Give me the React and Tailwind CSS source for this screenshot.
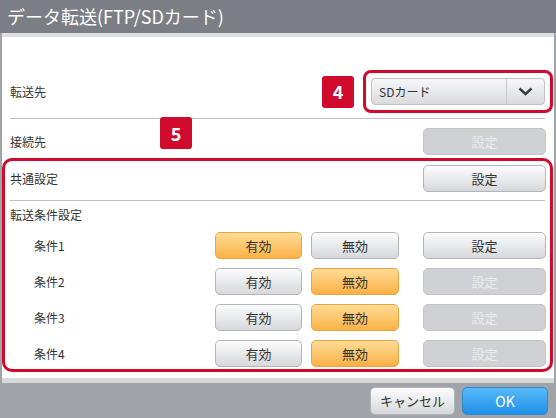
import React from "react";

const btnBase =
  "flex items-center justify-center h-[27px] rounded-[5px] border text-[13px] shrink-0";
const btnStyles = {
  normal:
    "border-[#b3b6b9] bg-gradient-to-b from-[#fcfcfd] to-[#d6d8db] text-[#333] shadow-[inset_0_1px_0_#fff]",
  on: "border-[#e6a443] bg-gradient-to-b from-[#ffdb94] to-[#fbb143] text-[#333]",
  off: "border-[#c2c4c7] bg-[#cfd1d4] text-[#ececec]",
};

const Btn = ({ kind = "normal", w, children }) => (
  <div className={`${btnBase} ${btnStyles[kind]} ${w}`}>{children}</div>
);

const Badge = ({ n }) => (
  <div className="w-[32px] h-[32px] rounded-[3px] bg-[#cf0a2c] text-white text-[18px] font-bold flex items-center justify-center shrink-0">
    {n}
  </div>
);

export default function App() {
  // 条件 rows: which of 有効/無効 is selected, and whether 設定 is enabled
  const conditions = [
    { name: "条件1", on: true },
    { name: "条件2", on: false },
    { name: "条件3", on: false },
    { name: "条件4", on: false },
  ];

  return (
    <div className="w-[556px] h-[418px] flex flex-col bg-[#a0a3a7] font-['Noto_Sans_CJK_JP',sans-serif] text-[#333]">
      {/* Title */}
      <div className="h-[33px] shrink-0 bg-[#7b7e84] text-white text-[18px] leading-[33px] pl-[7px]">
        データ転送(FTP/SDカード)
      </div>

      {/* Body */}
      <div className="relative mx-[2px] flex-1 flex flex-col bg-white border-t-[4px] border-[#dcdee0]">
        {/* 転送先 */}
        <div className="flex items-center mt-[33px] pl-[8px] pr-[1px]">
          <span className="flex-1 text-[12px]">転送先</span>
          <div className="mr-[9px]">
            <Badge n="4" />
          </div>
          <div className="w-[190px] h-[43px] border-[3px] border-[#cf0a2c] rounded-[8px] px-[5px] flex items-center">
            <div className="flex-1 h-[27px] flex items-center rounded-[4px] border border-[#bfc2c5] bg-gradient-to-b from-[#f6f7f8] to-[#d9dbde]">
              <span className="flex-1 pl-[7px] text-[12px]">SDカード</span>
              <div className="w-[38px] h-full border-l border-[#c4c6c9] flex items-center justify-center">
                <svg width="15" height="9" viewBox="0 0 15 9">
                  <polyline
                    points="1.5,1.5 7.5,7 13.5,1.5"
                    fill="none"
                    stroke="#3b3b3b"
                    strokeWidth="2.4"
                  />
                </svg>
              </div>
            </div>
          </div>
        </div>

        <div className="mt-[5px] ml-[8px] mr-[9px] h-px bg-[#bdbfc2]" />

        {/* 接続先 */}
        <div className="flex items-center mt-[9px] pl-[8px] pr-[8px]">
          <span className="flex-1 text-[12px]">接続先</span>
          <Btn kind="off" w="w-[123px]">設定</Btn>
        </div>

        <div className="absolute left-[158px] top-[80px]">
          <Badge n="5" />
        </div>

        {/* 共通設定 / 転送条件設定 */}
        <div className="mt-[3px] mr-[1px] border-[3px] border-[#cf0a2c] rounded-[10px] pb-[2px]">
          <div className="flex items-center mt-[4px] pl-[5px] pr-[4px]">
            <span className="flex-1 text-[12px]">共通設定</span>
            <Btn w="w-[123px]">設定</Btn>
          </div>

          <div className="mt-[8px] mx-[5px] h-px bg-[#bdbfc2]" />

          <div className="mt-[5px] pl-[5px] text-[12px] leading-[18px]">転送条件設定</div>

          <div className="mt-[8px] flex flex-col gap-[9px] pr-[4px]">
            {conditions.map((c) => (
              <div key={c.name} className="flex items-center">
                <span className="flex-1 pl-[29px] text-[12px]">{c.name}</span>
                <Btn kind={c.on ? "on" : "normal"} w="w-[87px]">有効</Btn>
                <div className="ml-[9px]">
                  <Btn kind={c.on ? "normal" : "on"} w="w-[88px]">無効</Btn>
                </div>
                <div className="ml-[24px]">
                  <Btn kind={c.on ? "normal" : "off"} w="w-[123px]">設定</Btn>
                </div>
              </div>
            ))}
          </div>
        </div>
      </div>

      <div className="h-[5px] shrink-0 mx-[2px] bg-[#d6d8da]" />

      {/* Footer */}
      <div className="h-[35px] shrink-0 flex items-start justify-end gap-[7px] pt-[4px] pr-[8px]">
        <div className="w-[85px] h-[28px] flex items-center justify-center rounded-[5px] border border-[#b3b6b9] bg-gradient-to-b from-[#fcfcfd] to-[#d6d8db] text-[13px] text-[#333]">
          キャンセル
        </div>
        <div className="w-[86px] h-[28px] flex items-center justify-center rounded-[5px] border border-[#2d8bd6] bg-gradient-to-b from-[#56baf8] to-[#1f8fe8] text-[14px] text-white">
          OK
        </div>
      </div>
    </div>
  );
}
